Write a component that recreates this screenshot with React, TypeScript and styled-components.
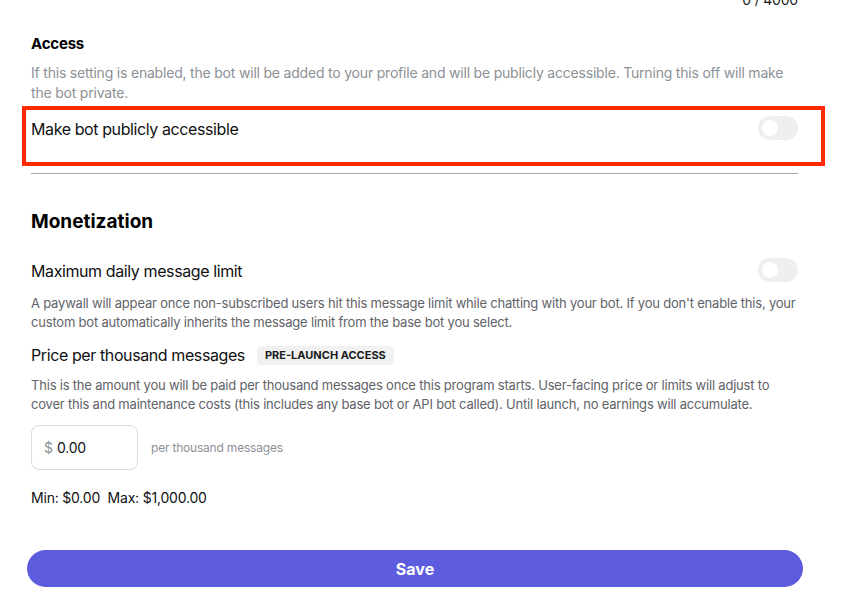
import React, { useState } from "react";
import styled, { createGlobalStyle } from "styled-components";

const GlobalStyle = createGlobalStyle`
	html, body {
		margin: 0;
		padding: 0;
		background: #ffffff;
	}
	body {
		font-family: Inter, "Liberation Sans", Arial, sans-serif;
		color: #000000;
		-webkit-font-smoothing: antialiased;
	}
	*, *::before, *::after {
		box-sizing: border-box;
	}
`;

export default function App() {
	const [isPublic, setIsPublic] = useState(false);
	const [hasLimit, setHasLimit] = useState(false);
	const [price, setPrice] = useState("0.00");

	return (
		<>
			<GlobalStyle />
			<Page>
				<Counter>0 / 4000</Counter>

				<Section>
					<SectionLabel>Access</SectionLabel>
					<Hint>
						If this setting is enabled, the bot will be added to your profile and will be publicly accessible.
						Turning this off will make the bot private.
					</Hint>
					<Row $highlight>
						<RowLabel>Make bot publicly accessible</RowLabel>
						<Toggle $on={isPublic} onClick={() => setIsPublic(!isPublic)} aria-label="Make bot publicly accessible" />
					</Row>
				</Section>

				<Divider />

				<Section>
					<Heading>Monetization</Heading>
					<Row>
						<RowLabel>Maximum daily message limit</RowLabel>
						<Toggle $on={hasLimit} onClick={() => setHasLimit(!hasLimit)} aria-label="Maximum daily message limit" />
					</Row>
					<Note $top={12}>
						A paywall will appear once non-subscribed users hit this message limit while chatting with your bot. If
						you don't enable this, your custom bot automatically inherits the message limit from the base bot you
						select.
					</Note>
					<LabelRow>
						<RowLabel>Price per thousand messages</RowLabel>
						<Badge>Pre-launch access</Badge>
					</LabelRow>
					<Note $top={10}>
						This is the amount you will be paid per thousand messages once this program starts. User-facing price or
						limits will adjust to cover this and maintenance costs (this includes any base bot or API bot called).
						Until launch, no earnings will accumulate.
					</Note>
					<PriceRow>
						<PriceBox>
							<Currency>$</Currency>
							<PriceInput value={price} onChange={(e) => setPrice(e.target.value)} />
						</PriceBox>
						<PriceUnit>per thousand messages</PriceUnit>
					</PriceRow>
					<Range>Min: $0.00&nbsp;&nbsp;Max: $1,000.00</Range>
				</Section>

				<SaveButton>Save</SaveButton>
			</Page>
		</>
	);
}

const Page = styled.div`
	width: 853px;
	height: 603px;
	overflow: hidden;
	padding: 0 55px 0 31px;
	display: flex;
	flex-direction: column;
`;

const Counter = styled.div`
	margin-top: -9px;
	align-self: flex-end;
	font-size: 14px;
	line-height: 17px;
	letter-spacing: -0.2px;
	color: #1a1a1a;
	margin-bottom: 11px;
`;

const Section = styled.div`
	display: flex;
	flex-direction: column;
`;

const SectionLabel = styled.div`
	font-size: 15px;
	font-weight: 700;
	line-height: 20px;
	letter-spacing: -0.2px;
	margin-top: 15px;
	margin-bottom: 9px;
`;

const Heading = styled.h2`
	margin: 34px 0 0;
	font-size: 19px;
	font-weight: 700;
	line-height: 28px;
`;

const Hint = styled.p`
	margin: 0;
	font-size: 14px;
	line-height: 20px;
	letter-spacing: -0.2px;
	color: #8c9196;
`;

const Row = styled.div<{ $highlight?: boolean }>`
	position: relative;
	display: flex;
	align-items: flex-start;
	justify-content: space-between;
	margin-top: ${({ $highlight }) => ($highlight ? "3px" : "0")};
	padding-top: ${({ $highlight }) => ($highlight ? "12px" : "24px")};
	height: ${({ $highlight }) => ($highlight ? "62px" : "auto")};

	${({ $highlight }) =>
		$highlight &&
		`
		&::after {
			content: "";
			position: absolute;
			top: 0;
			left: -9px;
			right: -27px;
			height: 60px;
			border: 4px solid #ff2a00;
			pointer-events: none;
		}
	`}
`;

const RowLabel = styled.span`
	font-size: 16px;
	line-height: 22px;
	letter-spacing: -0.4px;
	color: #111111;
`;

const Toggle = styled.button<{ $on: boolean }>`
	position: relative;
	width: 40px;
	height: 24px;
	margin-top: -2px;
	border: none;
	border-radius: 12px;
	padding: 0;
	background: ${({ $on }) => ($on ? "#5d5cde" : "#eef0f0")};
	cursor: pointer;
	flex-shrink: 0;

	&::before {
		content: "";
		position: absolute;
		top: 4px;
		left: ${({ $on }) => ($on ? "20px" : "4px")};
		width: 16px;
		height: 16px;
		border-radius: 50%;
		background: #ffffff;
	}
`;

const Divider = styled.div`
	width: 767px;
	height: 1px;
	flex-shrink: 0;
	margin-top: 5px;
	background: #a8a8a8;
`;

const Note = styled.p<{ $top: number }>`
	margin: ${({ $top }) => $top}px 0 0;
	font-size: 13px;
	line-height: 19px;
	letter-spacing: -0.2px;
	color: #5f6368;
`;

const LabelRow = styled.div`
	display: flex;
	align-items: center;
	gap: 12px;
	margin-top: 12px;
`;

const Badge = styled.span`
	display: inline-flex;
	align-items: center;
	height: 19px;
	padding: 0 8px;
	border-radius: 4px;
	background: #f0f1f1;
	font-size: 11px;
	font-weight: 700;
	text-transform: uppercase;
	color: #1a1a1a;
`;

const PriceRow = styled.div`
	display: flex;
	align-items: center;
	gap: 13px;
	margin-top: 11px;
`;

const PriceBox = styled.label`
	display: flex;
	align-items: center;
	gap: 4px;
	width: 107px;
	height: 45px;
	padding: 0 12px;
	border: 1px solid #d9dbdc;
	border-radius: 8px;
`;

const Currency = styled.span`
	font-size: 14px;
	color: #8c9196;
`;

const PriceInput = styled.input`
	width: 100%;
	border: none;
	outline: none;
	padding: 0;
	font-family: inherit;
	font-size: 14px;
	letter-spacing: -0.2px;
	color: #111111;
	background: transparent;
`;

const PriceUnit = styled.span`
	font-size: 12px;
	letter-spacing: -0.2px;
	color: #8c9196;
`;

const Range = styled.div`
	margin-top: 19px;
	font-size: 14px;
	line-height: 18px;
	letter-spacing: -0.2px;
	color: #111111;
`;

const SaveButton = styled.button`
	margin: 43px 0 0 -4px;
	width: 776px;
	height: 37px;
	border: none;
	border-radius: 19px;
	background: #5d5cde;
	color: #ffffff;
	font-family: inherit;
	font-size: 16px;
	font-weight: 700;
	cursor: pointer;
`;
